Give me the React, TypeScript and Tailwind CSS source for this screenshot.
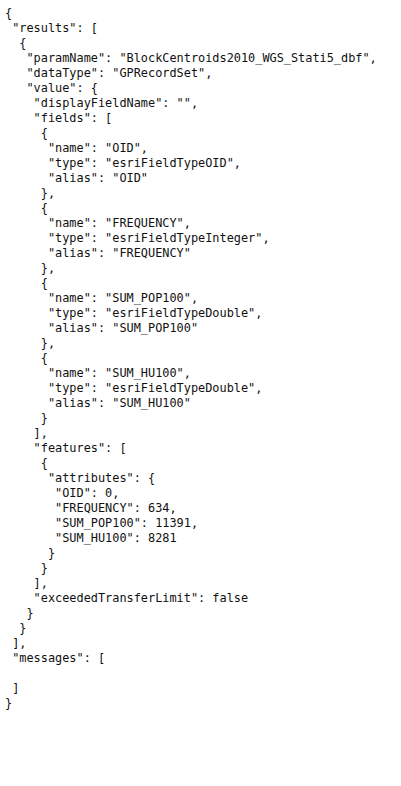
import React from 'react';

const lines = [
  '{',
  ' "results": [',
  '  {',
  '   "paramName": "BlockCentroids2010_WGS_Stati5_dbf",',
  '   "dataType": "GPRecordSet",',
  '   "value": {',
  '    "displayFieldName": "",',
  '    "fields": [',
  '     {',
  '      "name": "OID",',
  '      "type": "esriFieldTypeOID",',
  '      "alias": "OID"',
  '     },',
  '     {',
  '      "name": "FREQUENCY",',
  '      "type": "esriFieldTypeInteger",',
  '      "alias": "FREQUENCY"',
  '     },',
  '     {',
  '      "name": "SUM_POP100",',
  '      "type": "esriFieldTypeDouble",',
  '      "alias": "SUM_POP100"',
  '     },',
  '     {',
  '      "name": "SUM_HU100",',
  '      "type": "esriFieldTypeDouble",',
  '      "alias": "SUM_HU100"',
  '     }',
  '    ],',
  '    "features": [',
  '     {',
  '      "attributes": {',
  '       "OID": 0,',
  '       "FREQUENCY": 634,',
  '       "SUM_POP100": 11391,',
  '       "SUM_HU100": 8281',
  '      }',
  '     }',
  '    ],',
  '    "exceededTransferLimit": false',
  '   }',
  '  }',
  ' ],',
  ' "messages": [',
  '',
  ' ]',
  '}',
];

export default function App() {
  return (
    <div className="min-h-[786px] w-full bg-white">
      <pre className="m-0 pt-[6px] pl-[5px] font-['DejaVu_Sans_Mono',monospace] text-[11.88px] leading-[15px] text-[#111]">
        {lines.join('\n')}
      </pre>
    </div>
  );
}
